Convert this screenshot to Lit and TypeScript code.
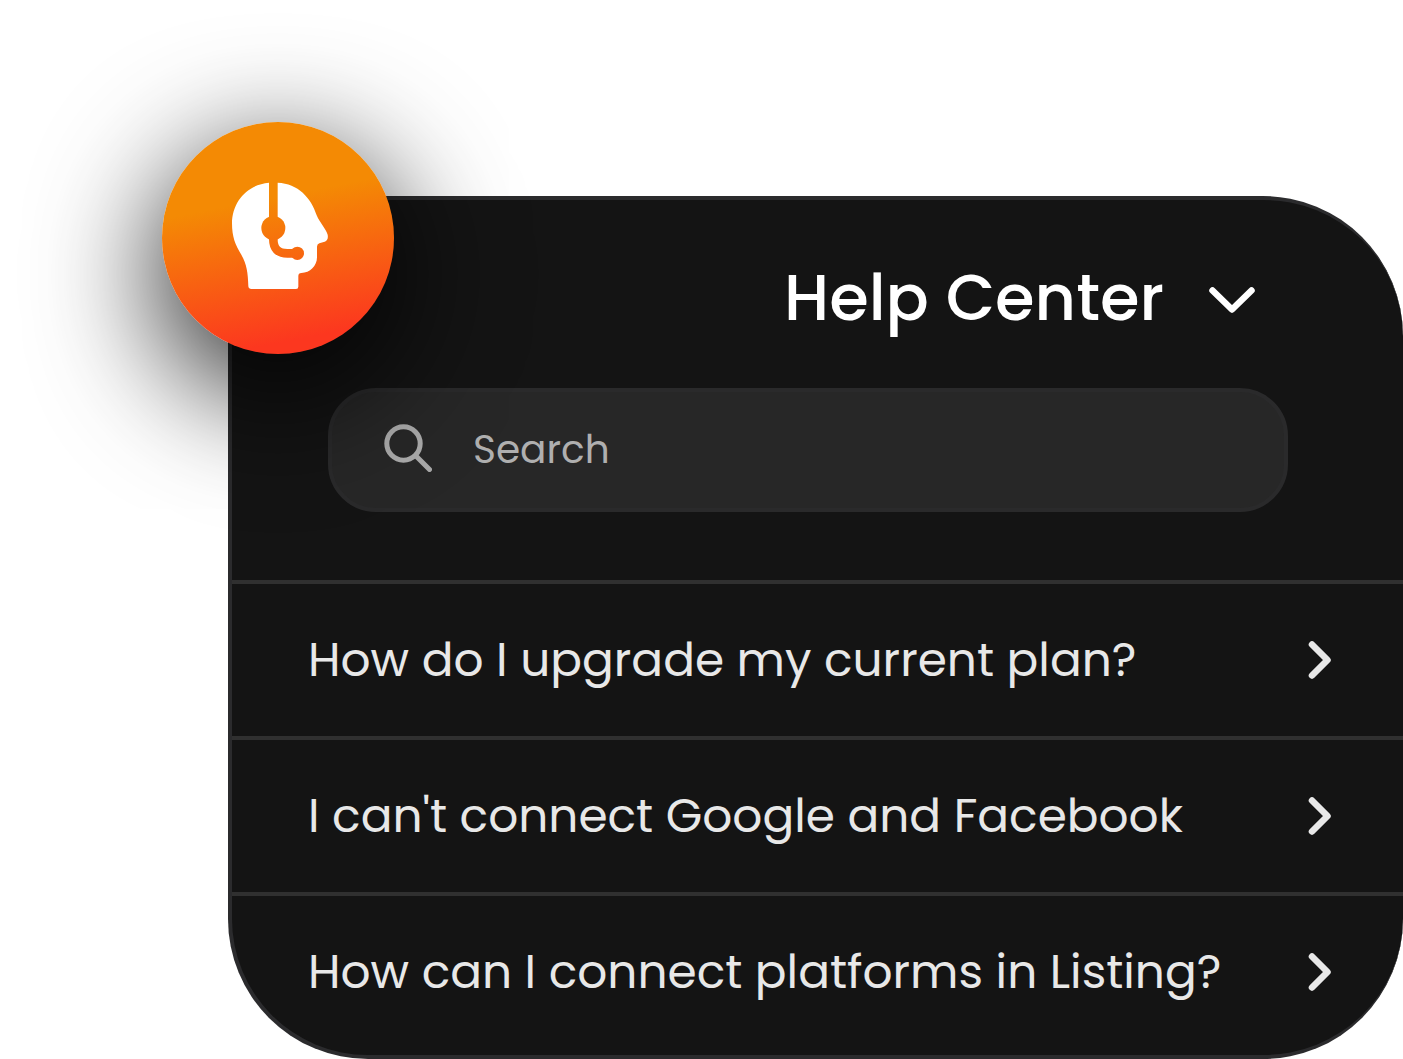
import { LitElement, html, css, svg } from "lit";
import { customElement, property, state } from "lit/decorators.js";

const chevronDown = svg`<path d="M4.5 16.5 24 35.5 43.5 16.5" />`;
const chevronRight = svg`<path d="M17 8.5 32.5 24 17 39.5" />`;

@customElement("support-badge")
export class SupportBadge extends LitElement {
  static styles = css`
    :host {
      display: block;
      width: 232px;
      height: 232px;
      border-radius: 50%;
      background: linear-gradient(169deg, #f48a04 35%, #fc371f 88%);
      box-shadow: 0 36px 120px 8px rgba(0, 0, 0, 0.8);
    }
    .icon {
      display: block;
      width: 100%;
      height: 100%;
    }
  `;

  render() {
    return html`
      <svg class="icon" viewBox="-174 -144 696 696" aria-hidden="true">
        <mask id="headset" maskUnits="userSpaceOnUse" x="0" y="0" width="360" height="390">
          <rect width="360" height="390" fill="#fff" />
          <path d="M160 20V208Q160 250 202 250H232" fill="none" stroke="#000" stroke-width="26" />
          <circle cx="160" cy="174" r="36" fill="#000" />
          <circle cx="232" cy="250" r="20" fill="#000" />
        </mask>
        <path
          mask="url(#headset)"
          fill="#fff"
          d="M147 38C84 43 36 94 36 160C36 200 46 226 64 254C80 282 84 308 85 349Q86 357 94 357H228Q235 357 235 350V318Q235 309 244 309C270 309 291 288 291 262V230Q291 223 298 220L314 215Q326 210 323 194C318 177 299 158 290 136C274 84 234 40 173 38Z"
        />
      </svg>
    `;
  }
}

@customElement("help-row")
export class HelpRow extends LitElement {
  static styles = css`
    :host {
      display: block;
    }
    .link {
      display: flex;
      align-items: center;
      justify-content: space-between;
      gap: 24px;
      min-height: 152px;
      padding: 0 60px 0 76px;
      color: #e8e8e8;
      font-size: 47px;
      line-height: 72px;
      text-decoration: none;
    }
    .arrow {
      flex: none;
      width: 48px;
      height: 48px;
      fill: none;
      stroke: currentColor;
      stroke-width: 6.5;
      stroke-linecap: round;
      stroke-linejoin: round;
    }
  `;

  @property() label = "";

  render() {
    return html`
      <a class="link" href="#article">
        <span>${this.label}</span>
        <svg class="arrow" viewBox="0 0 48 48" aria-hidden="true">${chevronRight}</svg>
      </a>
    `;
  }
}

@customElement("app-root")
export class AppRoot extends LitElement {
  static styles = css`
    :host {
      display: block;
      box-sizing: border-box;
      min-height: 100vh;
      padding: 196px 0 0 228px;
      background: #fff;
      font-family: Poppins, Inter, "Open Sans", sans-serif;
    }
    .card {
      position: relative;
      padding-bottom: 7px;
      border: 4px solid #2b2b2d;
      border-right: 0;
      border-radius: 140px;
      background: #141414;
    }
    .badge {
      position: absolute;
      top: -78px;
      left: -70px;
    }
    .header {
      display: flex;
      flex-direction: column;
      gap: 42px;
      padding: 50px 115px 68px 96px;
    }
    .title {
      align-self: flex-end;
      margin: 0 32px 0 0;
      font-size: 64px;
      font-weight: 500;
      line-height: 96px;
    }
    .toggle {
      display: flex;
      align-items: center;
      gap: 44px;
      padding: 0;
      border: 0;
      background: none;
      color: #fff;
      font: inherit;
      cursor: pointer;
    }
    .caret {
      width: 48px;
      height: 48px;
      fill: none;
      stroke: currentColor;
      stroke-width: 6.5;
      stroke-linecap: round;
      stroke-linejoin: round;
    }
    .search {
      display: flex;
      align-items: center;
      gap: 41px;
      box-sizing: border-box;
      height: 124px;
      padding: 0 52px;
      border: 4px solid #2a2a2b;
      border-radius: 48px;
      background: #272727;
      color: #a9a9a9;
    }
    .lens {
      flex: none;
      width: 48px;
      height: 48px;
      margin-bottom: 4px;
      fill: none;
      stroke: currentColor;
      stroke-width: 5;
      stroke-linecap: round;
    }
    .field {
      flex: 1;
      min-width: 0;
      padding: 0;
      border: 0;
      outline: 0;
      background: none;
      color: #e8e8e8;
      font: inherit;
      font-size: 39px;
      line-height: 60px;
    }
    .field::placeholder {
      color: #afafaf;
      opacity: 1;
    }
    .list {
      margin: 0;
      padding: 0;
      list-style: none;
    }
    .item {
      border-top: 4px solid #303030;
    }
  `;

  @state() private questions = [
    "How do I upgrade my current plan?",
    "I can't connect Google and Facebook",
    "How can I connect platforms in Listing?",
  ];

  render() {
    return html`
      <main class="card">
        <header class="header">
          <h1 class="title">
            <button class="toggle" type="button">
              Help Center
              <svg class="caret" viewBox="0 0 48 48" aria-hidden="true">${chevronDown}</svg>
            </button>
          </h1>
          <label class="search">
            <svg class="lens" viewBox="0 0 48 48" aria-hidden="true">
              <circle cx="19.5" cy="19.5" r="16.7" />
              <path d="M32 32 45.5 45.5" />
            </svg>
            <input class="field" type="search" placeholder="Search" aria-label="Search" />
          </label>
        </header>
        <ul class="list">
          ${this.questions.map(
            (question) => html`<li class="item"><help-row .label=${question}></help-row></li>`
          )}
        </ul>
        <support-badge class="badge"></support-badge>
      </main>
    `;
  }
}
